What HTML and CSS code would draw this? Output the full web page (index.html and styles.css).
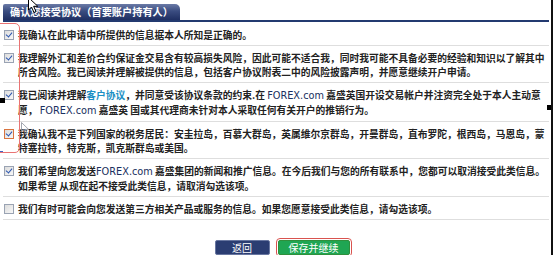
FILE: index.html
```html
<!DOCTYPE html>
<html lang="zh-CN">
<head>
<meta charset="utf-8">
<title>确认您接受协议</title>
<link rel="stylesheet" href="styles.css">
</head>
<body>
<div class="panel">
  <div class="tabbar"><div class="tab">确认您接受协议（首要账户持有人）</div></div>
  <div class="rows">
    <div class="row">
      <span class="cb checked"></span>
      <div class="txt">我确认在此申请中所提供的信息据本人所知是正确的。</div>
    </div>
    <div class="row">
      <span class="cb checked"></span>
      <div class="txt">我理解外汇和差价合约保证金交易含有较高损失风险，因此可能不适合我，同时我可能不具备必要的经验和知识以了解其中<br>所含风险。我已阅读并理解被提供的信息，包括客户协议附表二中的风险披露声明，并愿意继续开户申请。</div>
    </div>
    <div class="row">
      <span class="cb checked"></span>
      <div class="txt">我已阅读并理解<a class="link" href="#">客户协议</a>，并同意受该协议条款的约束.在 <span class="brand">FOREX.com</span> 嘉盛英国开设交易帐户并注资完全处于本人主动意<br>愿， <span class="brand">FOREX.com</span> 嘉盛英 国或其代理商未针对本人采取任何有关开户的推销行为。</div>
    </div>
    <div class="row">
      <span class="cb checked focus"></span>
      <div class="txt">我确认我不是下列国家的税务居民：安圭拉岛，百慕大群岛，英属维尔京群岛，开曼群岛，直布罗陀，根西岛，马恩岛，蒙<br>特塞拉特，特克斯，凯克斯群岛或美国。</div>
    </div>
    <div class="row">
      <span class="cb checked"></span>
      <div class="txt">我们希望向您发送<span class="brand">FOREX.com</span> 嘉盛集团的新闻和推广信息。在今后我们与您的所有联系中，您都可以取消接受此类信息。<br>如果希望 从现在起不接受此类信息，请取消勾选该项。</div>
    </div>
    <div class="row">
      <span class="cb"></span>
      <div class="txt">我们有时可能会向您发送第三方相关产品或服务的信息。如果您愿意接受此类信息，请勾选该项。</div>
    </div>
  </div>
  <div class="actions">
    <button class="btn back">返回</button>
    <button class="btn save">保存并继续</button>
  </div>

  <div class="mark-rect"></div>
  <div class="mark-dot d1"></div>
  <div class="mark-dot d2"></div>
  <div class="mark-blue"></div>
  <svg class="cursor c1" width="12" height="17" viewBox="0 0 12 17"><path d="M0.5 0.5 L0.5 13 L3.5 10 L6 15.5 L8 14.5 L5.6 9.3 L9.8 9.3 Z" fill="#fff" stroke="#000" stroke-width="1"/></svg>
  <svg class="cursor c2" width="10" height="13" viewBox="0 0 10 13"><path d="M0.5 0.5 L0.5 10 L2.8 7.8 L4.6 12 L6 11.4 L4.3 7.4 L7.6 7.4 Z" fill="none" stroke="#8a8f9a" stroke-width="0.8"/></svg>
</div>
</body>
</html>
```

FILE: styles.css
```css
html, body {
  margin: 0;
  padding: 0;
  background: #ffffff;
}
body {
  font-family: "Noto Sans CJK SC", "Noto Sans", sans-serif;
  font-size: 10px;
  font-weight: bold;
  color: #222222;
}
.panel {
  position: relative;
  width: 553px;
  height: 255px;
  box-sizing: border-box;
  padding: 0 2px 0 3px;
  border-right: 2px solid #111111;
  overflow: hidden;
}
.tabbar {
  padding-top: 4px;
  border-bottom: 2px solid #233a70;
}
.tab {
  width: 170px;
  height: 16px;
  padding-left: 7px;
  line-height: 16px;
  font-size: 10.2px;
  color: #ffffff;
  background: linear-gradient(#6a7aa6 0%, #3a4c80 45%, #1f2f62 100%);
  border-radius: 2px 5px 0 0;
  white-space: nowrap;
}
.row {
  display: flex;
  align-items: flex-start;
  padding: 5px 0 3px;
  border-bottom: 1px solid #dedede;
  line-height: 14px;
}
.row:first-child {
  padding-top: 6px;
}
.cb {
  flex: none;
  width: 10px;
  height: 10px;
  margin: 2px 4px 0 1px;
  box-sizing: border-box;
  border: 1px solid #9aa3b3;
  background: linear-gradient(135deg, #dcdcdc, #f8f8f8);
  position: relative;
}
.cb.checked::after {
  content: "";
  position: absolute;
  left: 2px;
  top: 0px;
  width: 3px;
  height: 5px;
  border: solid #2b56b0;
  border-width: 0 1.5px 1.5px 0;
  transform: rotate(40deg);
}
.cb.focus {
  border-color: #d9743f;
}
.txt {
  white-space: nowrap;
  font-size: 9.75px;
}
.link {
  color: #1b8fc4;
  text-decoration: none;
}
.brand {
  font-family: "DejaVu Sans", sans-serif;
  font-weight: normal;
  font-size: 9.75px;
  color: #1a3060;
}
.actions {
  display: flex;
  justify-content: center;
  gap: 8px;
  margin-top: 20px;
  padding-left: 12px;
}
.btn {
  height: 15px;
  padding: 0;
  font-family: "Noto Sans CJK SC", sans-serif;
  font-size: 10px;
  font-weight: normal;
  line-height: 13px;
  color: #ffffff;
  border-radius: 2px;
}
.back {
  width: 55px;
  background: #2b3d72;
  border: 1px solid #6876a0;
}
.save {
  width: 72px;
  background: #1fa653;
  border: 1px solid #2f8f3c;
  outline: 1px solid #d9534f;
  outline-offset: 1px;
}
.mark-rect {
  position: absolute;
  left: -6px;
  top: 23px;
  width: 24px;
  height: 128px;
  border: 1px solid #e97373;
  border-radius: 5px;
}
.mark-dot {
  position: absolute;
  background: #000000;
}
.mark-dot.d1 {
  left: 0;
  top: 98px;
  width: 5px;
  height: 5px;
}
.mark-dot.d2 {
  left: 547px;
  top: 105px;
  width: 4px;
  height: 5px;
}
.mark-blue {
  position: absolute;
  left: 0;
  top: 151px;
  width: 3px;
  height: 1px;
  background: #3f63c4;
}
.cursor {
  position: absolute;
  display: block;
}
.cursor.c1 {
  left: 28px;
  top: -3px;
}
.cursor.c2 {
  left: 21px;
  top: 122px;
}
```
